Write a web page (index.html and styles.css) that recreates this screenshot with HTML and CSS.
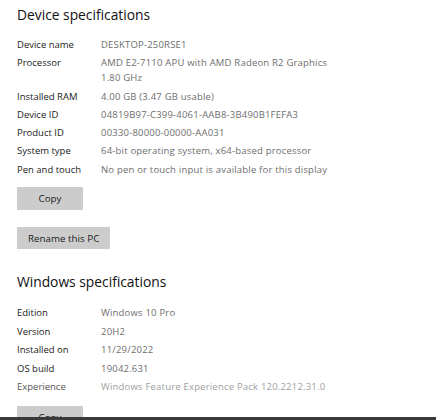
FILE: index.html
```html
<!DOCTYPE html>
<html lang="en">
<head>
    <meta charset="UTF-8">
    <title>About</title>
    <link rel="stylesheet" href="styles.css">
</head>
<body>
    <div class="page">
        <section class="specs">
            <h2>Device specifications</h2>
            <dl class="spec-list">
                <dt>Device name</dt><dd>DESKTOP-250RSE1</dd>
                <dt>Processor</dt><dd>AMD E2-7110 APU with AMD Radeon R2 Graphics 1.80 GHz</dd>
                <dt>Installed RAM</dt><dd>4.00 GB (3.47 GB usable)</dd>
                <dt>Device ID</dt><dd>04819B97-C399-4061-AAB8-3B490B1FEFA3</dd>
                <dt>Product ID</dt><dd>00330-80000-00000-AA031</dd>
                <dt>System type</dt><dd>64-bit operating system, x64-based processor</dd>
                <dt>Pen and touch</dt><dd>No pen or touch input is available for this display</dd>
            </dl>
            <button class="btn copy">Copy</button>
            <button class="btn rename">Rename this PC</button>
        </section>

        <section class="specs windows">
            <h2>Windows specifications</h2>
            <dl class="spec-list">
                <dt>Edition</dt><dd>Windows 10 Pro</dd>
                <dt>Version</dt><dd>20H2</dd>
                <dt>Installed on</dt><dd>11/29/2022</dd>
                <dt>OS build</dt><dd>19042.631</dd>
                <dt class="faded">Experience</dt><dd class="faded">Windows Feature Experience Pack 120.2212.31.0</dd>
            </dl>
            <button class="btn copy">Copy</button>
        </section>
    </div>
    <div class="taskbar-edge"></div>
</body>
</html>
```

FILE: styles.css
```css
html, body {
    height: 100%;
}
body {
    margin: 0;
    background-color: #fff;
    color: #1a1a1a;
    font-family: "Open Sans", "Noto Sans", sans-serif;
    overflow: hidden;
}
.page {
    padding: 5px 17px 0;
}
h2 {
    font-size: 13.8px;
    font-weight: 400;
    margin: 0;
    line-height: 20px;
    color: #111;
}
.specs.windows {
    margin-top: 23px;
}
.spec-list {
    display: grid;
    grid-template-columns: 84px 240px;
    margin: 12px 0 0;
    font-size: 9.5px;
    line-height: 15px;
}
.spec-list dt,
.spec-list dd {
    padding-bottom: 3.3px;
}
.windows .spec-list {
    margin-top: 13px;
}
.windows .spec-list dt,
.windows .spec-list dd {
    padding-bottom: 3.5px;
}
.spec-list dt {
    color: #1a1a1a;
}
.spec-list dd {
    margin: 0;
    color: #6e6e6e;
    letter-spacing: 0.2px;
}
.spec-list .faded {
    color: #555;
}
.spec-list dd.faded {
    color: #a0a0a0;
}
.btn {
    display: block;
    background-color: #cccccc;
    border: none;
    border-radius: 0;
    font-family: inherit;
    font-size: 9.8px;
    color: #1a1a1a;
    padding: 0 11px;
}
.btn.copy {
    width: 66px;
    height: 23px;
    padding: 0;
    margin-top: 7px;
}
.btn.rename {
    height: 22px;
    margin-top: 17px;
}
.windows .btn.copy {
    margin-top: 8.5px;
}
.taskbar-edge {
    position: fixed;
    left: 0;
    right: 0;
    bottom: 0;
    height: 3px;
    background-color: #3a3a3a;
}
```
